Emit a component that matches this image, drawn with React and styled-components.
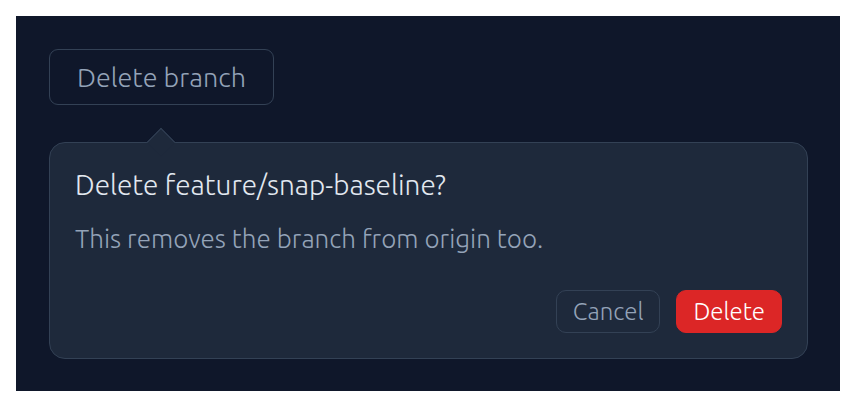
import React from "react";
import styled, { createGlobalStyle } from "styled-components";

const Global = createGlobalStyle`
  html, body { margin: 0; padding: 0; background: #ffffff; }
  body { font-family: "Ubuntu", "Noto Sans", "DejaVu Sans", sans-serif; }
  * { box-sizing: border-box; }
`;

const Page = styled.div`
  padding: 16px;
`;

const Stage = styled.div`
  background: #0f172a;
  height: 375px;
  padding: 33px 32px 32px 33px;
  display: flex;
  flex-direction: column;
  align-items: flex-start;
  gap: 37px;
`;

const Trigger = styled.button`
  height: 56px;
  width: 225px;
  border: 1px solid #334155;
  border-radius: 9px;
  background: transparent;
  color: #94a3b8;
  font-family: inherit;
  font-weight: 300;
  font-size: 27px;
  padding: 0;
  cursor: pointer;
`;

const Popover = styled.div`
  position: relative;
  align-self: stretch;
  height: 217px;
  background: #1e293b;
  border: 1px solid #334155;
  border-radius: 16px;
  padding: 24px 25px 25px 25px;
  display: flex;
  flex-direction: column;
`;

const Arrow = styled.span`
  position: absolute;
  top: -11px;
  left: 101px;
  width: 20px;
  height: 20px;
  background: #1e293b;
  border-left: 1px solid #334155;
  border-top: 1px solid #334155;
  transform: rotate(45deg);
`;

const Title = styled.div`
  color: #e2e8f0;
  font-size: 28px;
  font-weight: 300;
  line-height: 36px;
`;

const Body = styled.div`
  margin-top: 18px;
  color: #94a3b8;
  font-size: 26px;
  font-weight: 300;
  line-height: 36px;
`;

const Actions = styled.div`
  margin-top: auto;
  display: flex;
  justify-content: flex-end;
  gap: 16px;
`;

const ActionButton = styled.button`
  height: 43px;
  padding: 0 16px;
  border-radius: 10px;
  font-family: inherit;
  font-size: 24px;
  font-weight: 300;
  cursor: pointer;
  border: 1px solid ${(p) => (p.$danger ? "#dc2626" : "#334155")};
  background: ${(p) => (p.$danger ? "#dc2626" : "transparent")};
  color: ${(p) => (p.$danger ? "#ffffff" : "#94a3b8")};
`;

export default function App() {
  return (
    <>
      <Global />
      <Page>
        <Stage>
          <Trigger>Delete branch</Trigger>
          <Popover>
            <Arrow />
            <Title>Delete feature/snap-baseline?</Title>
            <Body>This removes the branch from origin too.</Body>
            <Actions>
              <ActionButton>Cancel</ActionButton>
              <ActionButton $danger>Delete</ActionButton>
            </Actions>
          </Popover>
        </Stage>
      </Page>
    </>
  );
}
